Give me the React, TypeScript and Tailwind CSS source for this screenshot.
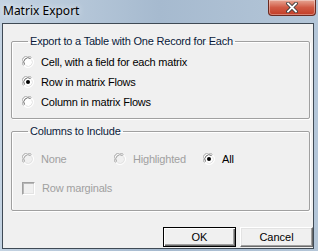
import React from "react";

const font = { fontFamily: '"Liberation Sans", Arial, sans-serif' };

function Radio({ checked, disabled }: { checked?: boolean; disabled?: boolean }) {
  return (
    <svg width="12" height="12" viewBox="0 0 12 12" className="shrink-0">
      <circle cx="6" cy="6" r="5.5" fill={disabled ? "#f0f0f0" : "#ffffff"} stroke="#ffffff" />
      <path d="M1.6 9.5 A5.5 5.5 0 0 1 9.5 1.6" fill="none" stroke="#a0a0a0" strokeWidth="1" />
      <path d="M2.6 8.6 A4.3 4.3 0 0 1 8.6 2.6" fill="none" stroke={disabled ? "#a0a0a0" : "#696969"} strokeWidth="1" />
      <path d="M3.6 9.6 A4.3 4.3 0 0 0 9.6 3.6" fill="none" stroke="#e3e3e3" strokeWidth="1" />
      {checked && <circle cx="6" cy="6" r="2" fill={disabled ? "#a0a0a0" : "#000"} />}
    </svg>
  );
}

function RadioItem({ label, checked, disabled, className }: { label: string; checked?: boolean; disabled?: boolean; className?: string }) {
  return (
    <div className={"flex items-center h-[20px] " + (className ?? "")}>
      <Radio checked={checked} disabled={disabled} />
      <span className={"ml-[7px] text-[11px] leading-[13px] tracking-[-0.2px] " + (disabled ? "text-[#a0a0a0]" : "text-black")}>{label}</span>
    </div>
  );
}

function Group({ title, children, className }: { title: string; children: React.ReactNode; className?: string }) {
  return (
    <fieldset className={"ml-[8px] w-[299px] border border-[#a0a0a0] rounded-[2px] shadow-[inset_1px_1px_0_#ffffff,1px_1px_0_#ffffff] " + (className ?? "")}>
      <legend className="ml-[6px] px-[2px] text-[11px] leading-[13px] tracking-[-0.2px] text-[#0a1a3a]">{title}</legend>
      {children}
    </fieldset>
  );
}

export default function App() {
  return (
    <div
      className="w-[318px] h-[251px] flex flex-col bg-gradient-to-r from-[#c4d3e2] via-[#a6bacf] to-[#b4c6d8] overflow-hidden"
      style={font}
    >
      <div className="h-[23px] flex items-start justify-between pr-[2px]">
        <span
          className="ml-[3px] mt-[3px] text-[12px] leading-[15px] text-black [text-shadow:0_0_6px_#ffffff]"
          style={{ fontFamily: '"Noto Sans", "Open Sans", sans-serif' }}
        >
          Matrix Export
        </span>
        <div className="w-[48px] h-[16px] rounded-b-[4px] border border-t-0 border-[#6a2a20] bg-gradient-to-b from-[#e6a594] via-[#d05a44] to-[#c23c25] flex items-center justify-center shadow-[inset_0_0_0_1px_rgba(255,255,255,0.35)]">
          <svg width="12" height="11" viewBox="0 0 12 11">
            <path d="M2 1.5 L10 9.5 M10 1.5 L2 9.5" stroke="#3a3a3a" strokeWidth="3.6" strokeLinecap="square" />
            <path d="M2 1.5 L10 9.5 M10 1.5 L2 9.5" stroke="#ffffff" strokeWidth="1.8" strokeLinecap="square" />
          </svg>
        </div>
      </div>
      <div className="flex-1 flex pl-[2px] pr-[4px] pb-[2px]">
        <div className="flex-1 flex flex-col bg-[#f0f0f0] border border-[#3f4a55]">
          <Group title="Export to a Table with One Record for Each" className="mt-[11px] pl-[10px] pt-[4px] pb-[6px]">
            <RadioItem label="Cell, with a field for each matrix" />
            <RadioItem label="Row in matrix Flows" checked />
            <RadioItem label="Column in matrix Flows" />
          </Group>
          <Group title="Columns to Include" className="mt-[6px] pl-[10px] pt-[11px] pb-[12px]">
            <div className="flex">
              <RadioItem label="None" disabled className="w-[92px]" />
              <RadioItem label="Highlighted" disabled className="w-[89px]" />
              <RadioItem label="All" checked />
            </div>
            <div className="flex items-center h-[20px] mt-[9px]">
              <div className="w-[13px] h-[13px] shrink-0 bg-[#f0f0f0] border border-t-[#a0a0a0] border-l-[#a0a0a0] border-r-white border-b-white shadow-[inset_1px_1px_0_#b8b8b8,inset_-1px_-1px_0_#e3e3e3]" />
              <span className="ml-[7px] text-[11px] leading-[13px] tracking-[-0.2px] text-[#a0a0a0]">Row marginals</span>
            </div>
          </Group>
          <div className="flex justify-end gap-[4px] mt-[16px]">
            <button className="w-[73px] h-[20px] bg-[#f0f0f0] border border-black shadow-[inset_1px_1px_0_#ffffff,inset_-1px_-1px_0_#696969,inset_-2px_-2px_0_#a0a0a0] text-[11px] leading-[13px] text-black">
              OK
            </button>
            <button className="w-[73px] h-[20px] bg-[#f0f0f0] border border-t-white border-l-white border-r-[#696969] border-b-[#696969] shadow-[inset_-1px_-1px_0_#a0a0a0,inset_1px_1px_0_#e3e3e3] text-[11px] leading-[13px] text-black">
              Cancel
            </button>
          </div>
        </div>
      </div>
    </div>
  );
}
